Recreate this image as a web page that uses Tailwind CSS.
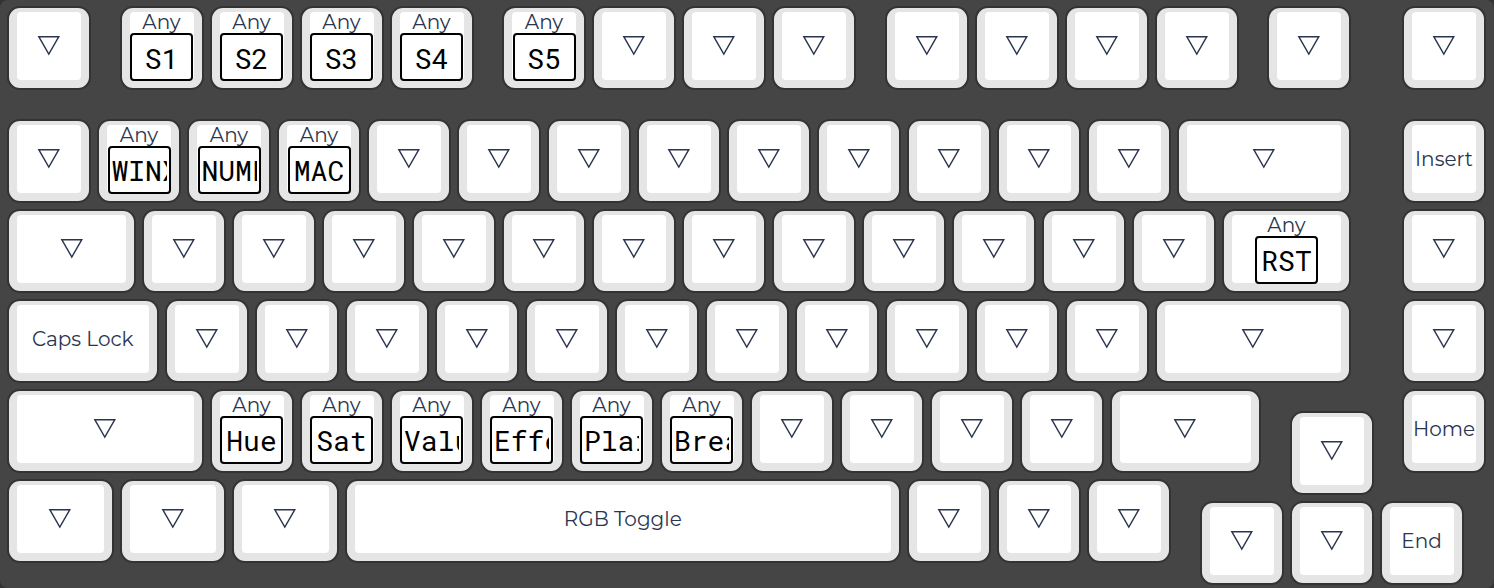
<!DOCTYPE html>
<html lang="en">
<head>
<meta charset="utf-8">
<meta name="viewport" content="width=device-width, initial-scale=1">
<title>Keymap</title>
<script src="https://cdn.jsdelivr.net/npm/@tailwindcss/browser@4"></script>
</head>
<body class="bg-[#333333]">
<main id="board" aria-label="Keyboard layout" class="grid grid-cols-66 grid-rows-26 w-full aspect-[1494/588] rounded-lg bg-[#454545] pt-[3px] pr-[5px] pl-1 font-[Montserrat,Inter,sans-serif] text-xl/6 text-[#2a3550]"></main>

<template id="blank-key">
  <button type="button" aria-label="Transparent" class="m-[5px] flex min-w-0 rounded-[11px] bg-[#e5e5e5] px-2 pt-1 pb-2 ring-2 ring-[#333333]">
    <span class="flex h-full w-full items-center justify-center rounded bg-white">
      <svg class="h-5 w-6" viewBox="0 0 24 20" fill="none" stroke="currentColor" stroke-width="1.4"><path d="M1.8 0.7H21.8L11.8 18Z"/></svg>
    </span>
  </button>
</template>

<template id="text-key">
  <button type="button" class="m-[5px] flex min-w-0 rounded-[11px] bg-[#e5e5e5] px-2 pt-1 pb-2 ring-2 ring-[#333333]">
    <span data-label class="flex h-full w-full items-center justify-center rounded bg-white whitespace-nowrap"></span>
  </button>
</template>

<template id="any-key">
  <div class="m-[5px] flex min-w-0 rounded-[11px] bg-[#e5e5e5] px-2 pt-1 pb-2 ring-2 ring-[#333333]">
    <label class="flex h-full w-full flex-col items-center rounded bg-white">
      <span class="h-[21px] leading-[21px]">Any</span>
      <input type="text" class="h-12 w-[63px] shrink-0 rounded border-2 border-black bg-white px-0.5 pt-1 pb-0.5 text-center font-['Roboto_Mono','DejaVu_Sans_Mono',monospace] text-[28px] text-black">
    </label>
  </div>
</template>

<script>
  // Each key: [x, y, width, text, kind], measured in key units (1u = 4 grid tracks).
  const keys = [];
  const row = (y, x, ...list) => {
    for (const k of list) {
      const [w, text, kind] = Array.isArray(k) ? k : [k, '', 'blank'];
      keys.push([x, y, w, text, kind]);
      x += w;
    }
  };
  const any = (text, w = 1) => [w, text, 'any'];
  const label = (text, w = 1) => [w, text, 'text'];

  row(0, 0, 1);
  row(0, 1.25, any('S1'), any('S2'), any('S3'), any('S4'));
  row(0, 5.5, any('S5'), 1, 1, 1);
  row(0, 9.75, 1, 1, 1, 1);
  row(0, 14, 1);
  row(0, 15.5, 1);
  row(1.25, 0, 1, any('WINXP'), any('NUMLK'), any('MAC'), 1, 1, 1, 1, 1, 1, 1, 1, 1, 2);
  row(1.25, 15.5, label('Insert'));
  row(2.25, 0, 1.5, 1, 1, 1, 1, 1, 1, 1, 1, 1, 1, 1, 1, any('RST', 1.5));
  row(2.25, 15.5, 1);
  row(3.25, 0, label('Caps Lock', 1.75), 1, 1, 1, 1, 1, 1, 1, 1, 1, 1, 1, 2.25);
  row(3.25, 15.5, 1);
  row(4.25, 0, 2.25, any('Hue'), any('Sat'), any('Value'), any('Effect'), any('Plain'), any('Breath'), 1, 1, 1, 1, 1.75);
  row(4.5, 14.25, 1);
  row(4.25, 15.5, label('Home'));
  row(5.25, 0, 1.25, 1.25, 1.25, label('RGB Toggle', 6.25), 1, 1, 1);
  row(5.5, 13.25, 1, 1, label('End'));

  const board = document.getElementById('board');
  for (const [x, y, w, text, kind] of keys) {
    const el = document.getElementById(kind + '-key').content.firstElementChild.cloneNode(true);
    el.style.gridArea = `${y * 4 + 1} / ${x * 4 + 1} / span 4 / span ${w * 4}`;
    if (kind === 'text') el.querySelector('[data-label]').textContent = text;
    if (kind === 'any') el.querySelector('input').value = text;
    board.append(el);
  }
</script>
</body>
</html>
